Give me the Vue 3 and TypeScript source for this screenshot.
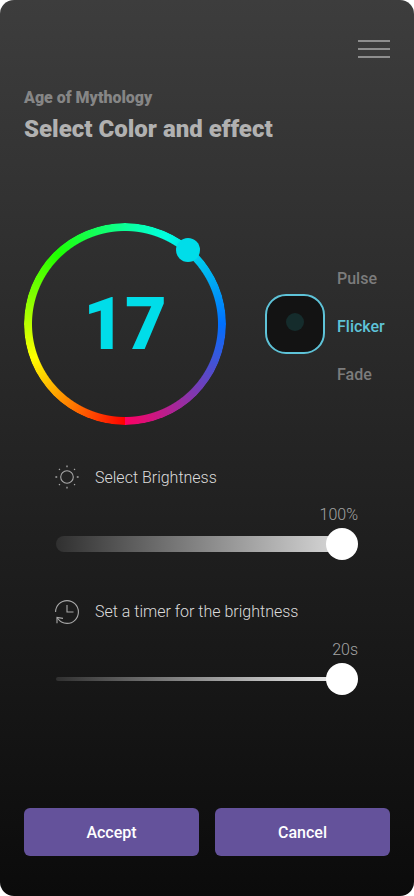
<script setup lang="ts">
import { ref } from 'vue'

const effects = ['Pulse', 'Flicker', 'Fade']
const selected = ref('Flicker')
const value = ref(17)
</script>

<template>
  <main class="screen">
    <header class="top">
      <button class="menu" aria-label="Menu"><i /><i /><i /></button>
    </header>
    <section class="titles">
      <h2>Age of Mythology</h2>
      <h1>Select Color and effect</h1>
    </section>

    <section class="picker">
      <div class="wheel">
        <div class="ring" />
        <span class="value">{{ value }}</span>
        <span class="knob" />
      </div>
      <div class="preview"><span class="dot" /></div>
      <ul class="effects">
        <li
          v-for="effect in effects"
          :key="effect"
          :class="{ active: effect === selected }"
          @click="selected = effect"
        >{{ effect }}</li>
      </ul>
    </section>

    <section class="setting">
      <div class="label">
        <svg width="24" height="24" viewBox="0 0 24 24" fill="none" stroke="#a8a8a8">
          <circle cx="12" cy="12" r="6.3" stroke-width="1.1" />
          <path
            d="M12 .4v1.8M12 21.8v1.8M.4 12h1.8M21.8 12h1.8M4 4l.9.9M19.1 19.1l.9.9M4 20l.9-.9M19.1 4.9L20 4"
            stroke-width="1.3"
          />
        </svg>
        <span>Select Brightness</span>
      </div>
      <div class="amount">100%</div>
      <div class="slider"><div class="track" /><span class="thumb" /></div>
    </section>

    <section class="setting timer">
      <div class="label">
        <svg class="clock" width="24" height="24" viewBox="0 0 24 24" fill="none" stroke="#a8a8a8" stroke-width="1.1">
          <path d="M.6 12A11.4 11.4 0 1 1 12 23.4C8 23.4 4.5 21.3 2.2 17.8" />
          <path d="M2 23.3V17.5L8 18.4" />
          <path d="M12 5v7h6.5" />
        </svg>
        <span>Set a timer for the brightness</span>
      </div>
      <div class="amount">20s</div>
      <div class="slider thin"><div class="track" /><span class="thumb" /></div>
    </section>

    <footer class="actions">
      <button>Accept</button>
      <button>Cancel</button>
    </footer>
  </main>
</template>

<style>
body {
  background: #fff;
}
</style>

<style scoped>
.screen {
  box-sizing: border-box;
  width: 414px;
  height: 896px;
  padding: 40px 24px;
  display: flex;
  flex-direction: column;
  border-radius: 14px;
  background: linear-gradient(180deg, #3d3d3d 0%, #0b0b0b 100%);
  font-family: Roboto, sans-serif;
  font-size: 16px;
  overflow: hidden;
}
button {
  font: inherit;
  border: 0;
  padding: 0;
  cursor: pointer;
}
.top {
  display: flex;
  justify-content: flex-end;
}
.menu {
  width: 32px;
  display: flex;
  flex-direction: column;
  gap: 6px;
  background: none;
}
.menu i {
  height: 2px;
  background: #8e8e8e;
}
.titles {
  margin-top: 28px;
}
h1,
h2 {
  margin: 0;
  font-weight: 900;
}
h2 {
  font-size: 16px;
  line-height: 24px;
  color: #868686;
}
h1 {
  margin-top: 3px;
  font-size: 24px;
  line-height: 32px;
  color: #b1b1b1;
}
.picker {
  display: flex;
  align-items: center;
  height: 202px;
  margin-top: 78px;
}
.wheel {
  position: relative;
  width: 202px;
  height: 202px;
  display: flex;
  align-items: center;
  justify-content: center;
}
.ring {
  position: absolute;
  inset: 0;
  border-radius: 50%;
  background: conic-gradient(
    #0cff98 0deg,
    #00ffe1 25deg,
    #00dde9 40deg,
    #0070ff 90deg,
    #ff0062 180deg,
    #ff0000 180deg,
    #ffff00 250deg,
    #1eff00 316deg,
    #0cff98 360deg
  );
  mask: radial-gradient(closest-side, transparent 92.5px, #000 93.5px);
}
.value {
  margin-top: 2px;
  font-size: 72px;
  font-weight: 900;
  line-height: 84px;
  color: #00dde9;
}
.knob {
  position: absolute;
  left: 152px;
  top: 15px;
  width: 24px;
  height: 24px;
  border-radius: 50%;
  background: #00dde9;
}
.preview {
  box-sizing: border-box;
  width: 60px;
  height: 60px;
  margin: 0 0 1px 39px;
  border: 2px solid #5ec3d8;
  border-radius: 21px;
  background: #131313;
  display: flex;
  align-items: center;
  justify-content: center;
}
.dot {
  width: 18px;
  height: 18px;
  margin-bottom: 3px;
  border-radius: 50%;
  background: #152c2c;
}
.effects {
  list-style: none;
  margin: 6px 0 0 12px;
  padding: 0;
  display: flex;
  flex-direction: column;
  gap: 24px;
  line-height: 24px;
  font-weight: 500;
  color: #7c7c7c;
}
.effects .active {
  color: #5ec3d8;
}
.setting {
  width: 303px;
  margin: 40px 0 0 31px;
  font-weight: 300;
}
.timer {
  margin-top: 39px;
}
.label {
  display: flex;
  align-items: center;
  gap: 16px;
  height: 24px;
  color: #dcdcdc;
}
.clock {
  margin-top: 2px;
}
.amount {
  margin-top: 14px;
  text-align: right;
  line-height: 24px;
  color: #a3a3a3;
}
.timer .amount {
  margin-top: 15px;
}
.slider {
  display: flex;
  align-items: center;
  height: 32px;
  margin: 1px 0 0 1px;
}
.track {
  flex: 1;
  height: 16px;
  margin-right: -16px;
  border-radius: 8px;
  background: linear-gradient(90deg, #303030, #d9d9d9);
}
.thin .track {
  height: 4px;
  border-radius: 2px;
  background: linear-gradient(90deg, #303030, #f0f0f0);
}
.thumb {
  position: relative;
  width: 32px;
  height: 32px;
  border-radius: 50%;
  background: #fff;
}
.actions {
  margin-top: auto;
  display: grid;
  grid-template-columns: 1fr 1fr;
  gap: 16px;
}
.actions button {
  height: 48px;
  border-radius: 6px;
  background: #64529b;
  color: #fff;
  font-weight: 500;
}
</style>
